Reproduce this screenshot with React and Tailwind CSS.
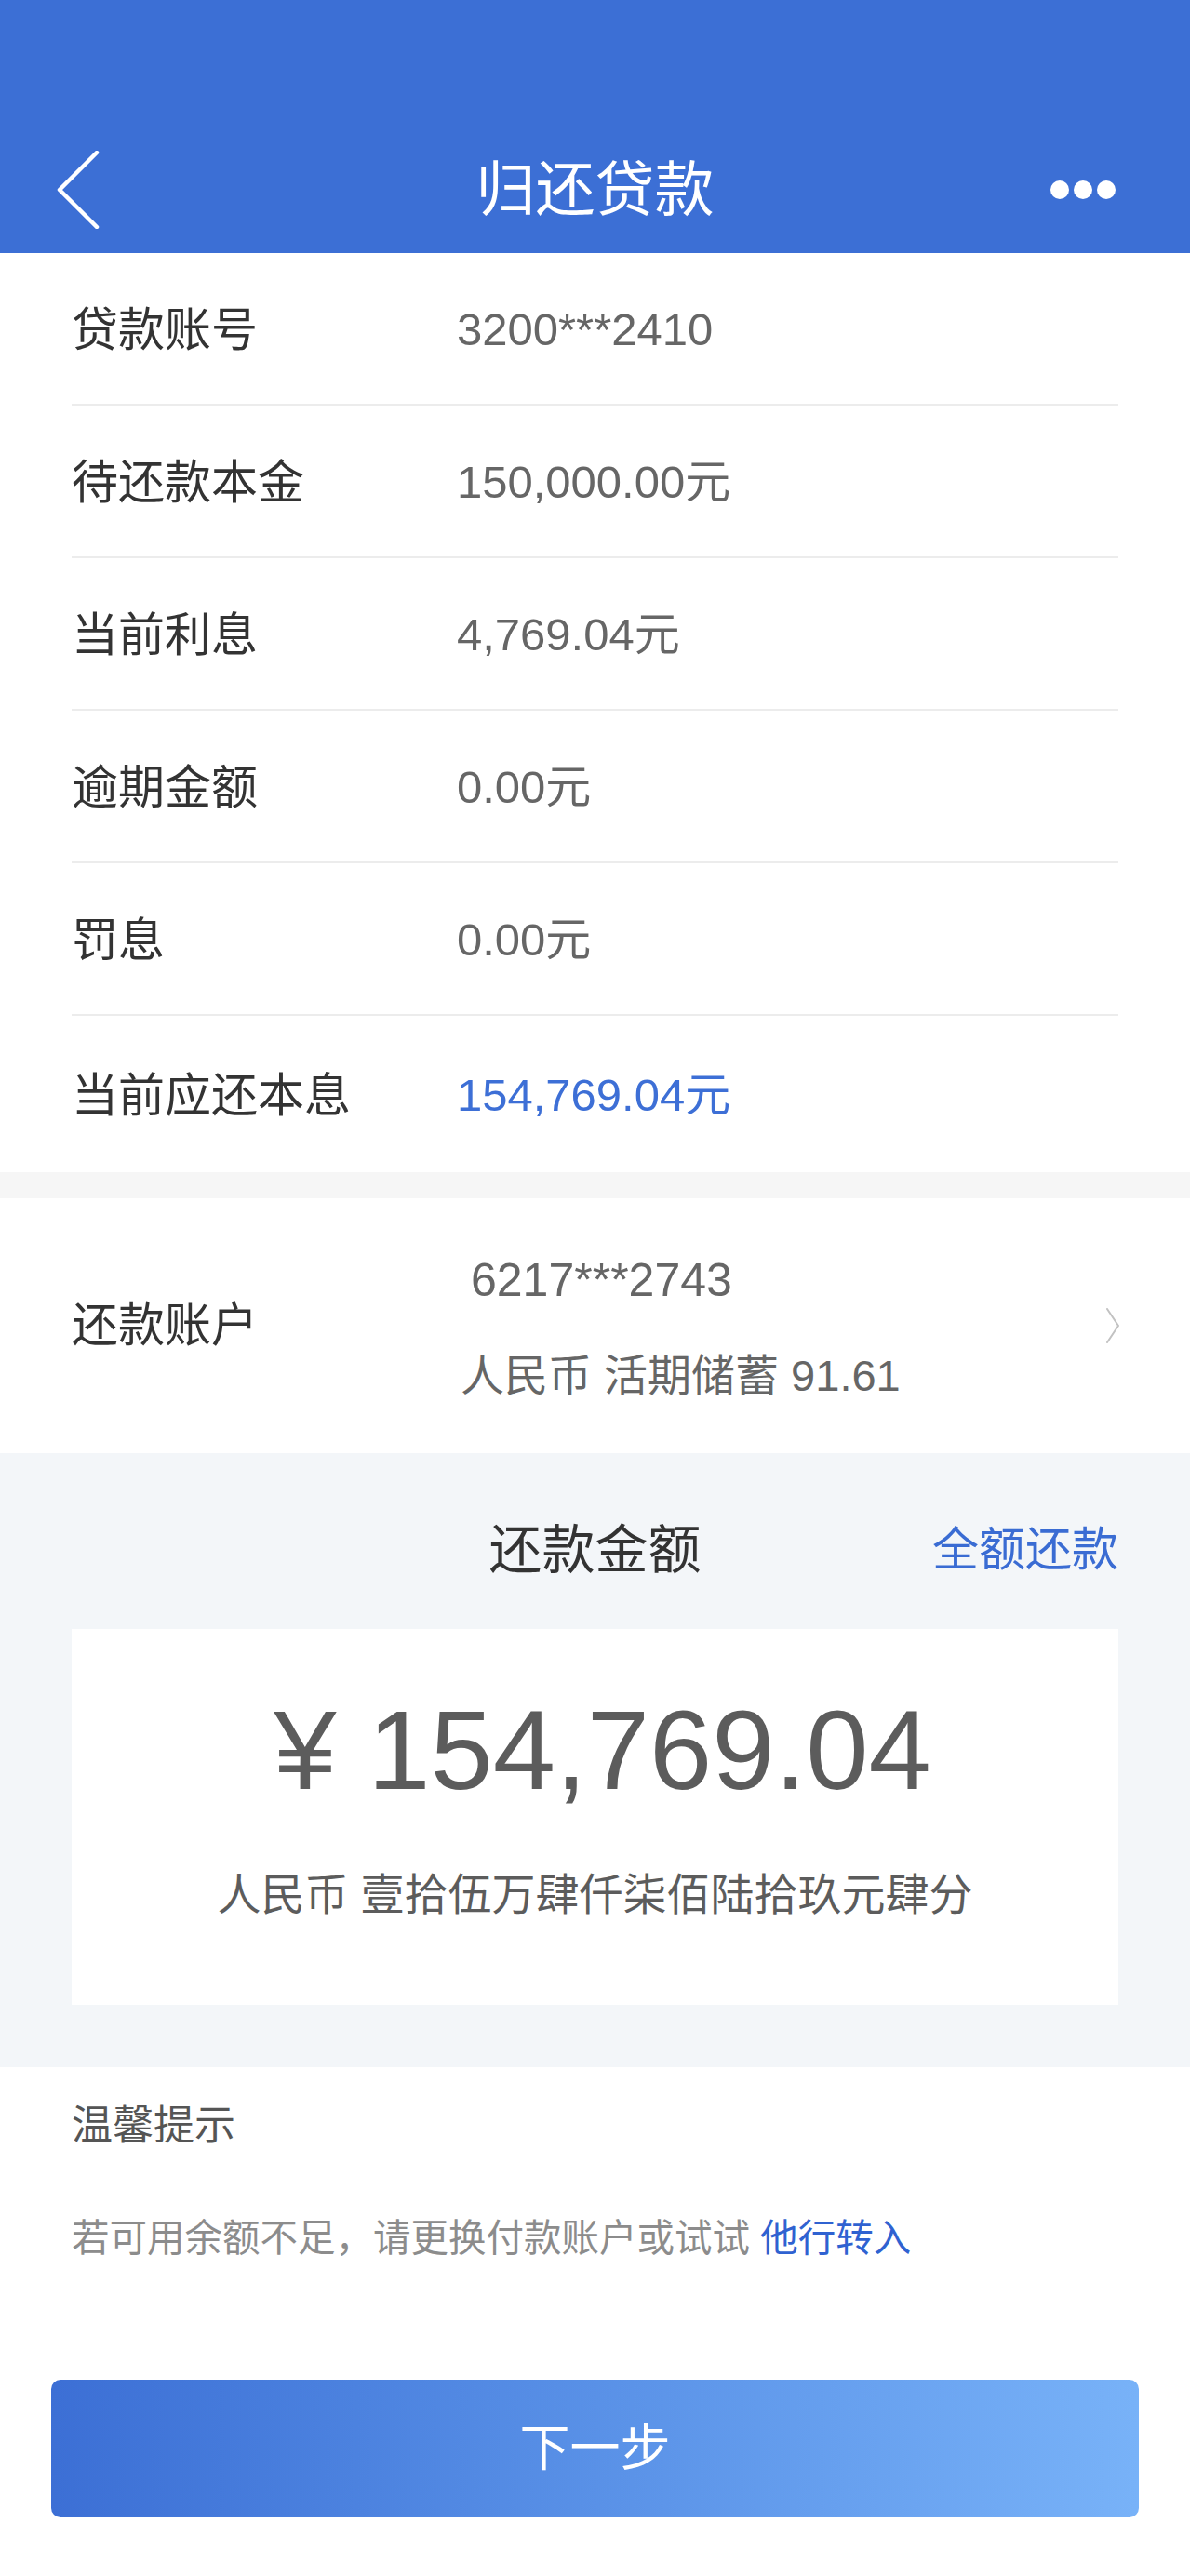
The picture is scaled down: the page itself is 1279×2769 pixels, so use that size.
const rows = [
  { label: '贷款账号', value: '3200***2410' },
  { label: '待还款本金', value: '150,000.00元' },
  { label: '当前利息', value: '4,769.04元' },
  { label: '逾期金额', value: '0.00元' },
  { label: '罚息', value: '0.00元' },
  { label: '当前应还本息', value: '154,769.04元', blue: true },
];

function Header() {
  return (
    <div className="h-[272px] bg-[#3c6fd5] flex flex-col">
      <div className="h-[136px]" />
      <div className="h-[136px] grid grid-cols-[1fr_auto_1fr] items-center">
        <div className="pl-[60px] flex items-center">
          <svg width="48" height="84" viewBox="0 0 48 84" fill="none">
            <path d="M44 2 L4 42 L44 82" stroke="white" strokeWidth="4.5" strokeLinecap="round" strokeLinejoin="round" />
          </svg>
        </div>
        <div className="text-white text-[64px] leading-none">归还贷款</div>
        <div className="flex justify-end items-center gap-[5px] pr-[80px]">
          <span className="w-[20px] h-[20px] rounded-full bg-white" />
          <span className="w-[20px] h-[20px] rounded-full bg-white" />
          <span className="w-[20px] h-[20px] rounded-full bg-white" />
        </div>
      </div>
    </div>
  );
}

export default function App() {
  return (
    <div className="w-[1279px] min-h-[2769px] bg-white font-['Liberation_Sans','Noto_Sans_CJK_SC',sans-serif]">
      <Header />

      {/* loan info */}
      <div className="bg-white">
        {rows.map((r, i) => (
          <div
            key={r.label}
            className={`mx-[77px] pt-[4px] flex items-center ${i === rows.length - 1 ? 'h-[168px]' : 'h-[164px] border-b-2 border-[#ececec]'}`}
          >
            <div className="w-[414px] text-[50px] text-[#333]">{r.label}</div>
            <div className={`text-[49px] ${r.blue ? 'text-[#3d6fd6]' : 'text-[#666]'}`}>{r.value}</div>
          </div>
        ))}
      </div>

      <div className="h-[28px] bg-[#f6f6f6]" />

      {/* repay account */}
      <div className="h-[274px] mx-[77px] flex items-center">
        <div className="w-[418px] text-[50px] text-[#333]">还款账户</div>
        <div className="flex-1 flex flex-col gap-[54px] pt-[2px]">
          <div className="pl-[11px] text-[50px] leading-none text-[#666]">6217***2743</div>
          <div className="text-[47px] leading-none text-[#666]">人民币 活期储蓄 91.61</div>
        </div>
        <svg width="16" height="38" viewBox="0 0 16 38" fill="none" className="mr-[-2px]">
          <path d="M2 1 L14 19 L2 37" stroke="#c2c2c2" strokeWidth="2" strokeLinecap="round" strokeLinejoin="round" />
        </svg>
      </div>

      {/* amount */}
      <div className="bg-[#f3f6f9] px-[77px] pt-[62px] pb-[67px]">
        <div className="h-[80px] grid grid-cols-[1fr_auto_1fr] items-center">
          <div />
          <div className="text-[57px] text-[#333]">还款金额</div>
          <div className="text-right text-[50px] text-[#3a6cd3]">全额还款</div>
        </div>
        <div className="mt-[47px] h-[404px] bg-white flex flex-col items-center pt-[70px]">
          <div className="pl-[16px] text-[121px] leading-[120px] text-[#5c5c5c]">¥ 154,769.04</div>
          <div className="mt-[66px] text-[47px] leading-[60px] text-[#5c5c5c]">人民币 壹拾伍万肆仟柒佰陆拾玖元肆分</div>
        </div>
      </div>

      {/* tips + button */}
      <div className="bg-white pt-[40px] pb-[63px]">
        <div className="px-[77px] text-[44px] leading-[46px] text-[#555]">温馨提示</div>
        <div className="mt-[75px] px-[77px] text-[40.5px] leading-[46px] text-[#8c8c8c]">
          若可用余额不足，请更换付款账户或试试 <span className="text-[#2f62d1]">他行转入</span>
        </div>
        <div className="mt-[129px] mx-[55px] h-[148px] rounded-[10px] bg-gradient-to-r from-[#3c6fd5] to-[#78b2f8] flex items-center justify-center">
          <span className="text-white text-[54px]">下一步</span>
        </div>
      </div>
    </div>
  );
}
